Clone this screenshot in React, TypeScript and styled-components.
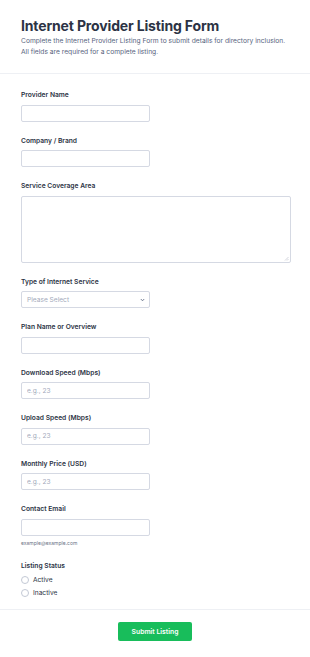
import React from 'react';
import styled, {createGlobalStyle} from 'styled-components';

const GlobalStyle = createGlobalStyle`
  html, body {
    margin: 0;
    padding: 0;
    background: #ffffff;
  }
  body {
    font-family: Inter, "Noto Sans", "Liberation Sans", sans-serif;
    color: #2c3345;
  }
  * {
    box-sizing: border-box;
  }
`;

const Page = styled.div`
  width: 310px;
  background: #ffffff;
`;

const Header = styled.header`
  padding: 17px 19px 15.5px 21px;
  border-bottom: 1px solid #eef0f4;
`;

const Title = styled.h1`
  margin: 0;
  font-size: 14px;
  line-height: 17px;
  font-weight: 700;
  color: #2c3345;
  letter-spacing: -0.15px;
`;

const Subtitle = styled.p`
  margin: 1.5px 0 0;
  font-size: 6.7px;
  line-height: 11px;
  color: #57647e;
`;

const Body = styled.div`
  padding: 16px 19px 9px 21px;
  border-bottom: 1px solid #eef0f4;
`;

const Field = styled.div<{$last?: boolean}>`
  margin-bottom: ${(p) => (p.$last ? '0' : '14px')};
`;

const Label = styled.label<{$tight?: boolean}>`
  display: block;
  font-size: 6.7px;
  line-height: 10px;
  font-weight: 600;
  color: #2c3345;
  margin-bottom: ${(p) => (p.$tight ? '3px' : '4.5px')};
`;

const Input = styled.input<{$wide?: boolean}>`
  display: block;
  width: ${(p) => (p.$wide ? '270px' : '129px')};
  height: 17px;
  margin: 0;
  padding: 0 5px;
  border: 1px solid #d5d9e3;
  border-radius: 2px;
  background: #ffffff;
  font-family: inherit;
  font-size: 6.6px;
  color: #2c3345;
  outline: none;
  &::placeholder {
    color: #a3aabb;
  }
`;

const TextAreaBox = styled.div`
  position: relative;
  width: 270px;
  height: 67px;
`;

const TextArea = styled.textarea`
  display: block;
  width: 100%;
  height: 100%;
  margin: 0;
  padding: 4px 5px;
  border: 1px solid #d5d9e3;
  border-radius: 2px;
  resize: none;
  font-family: inherit;
  font-size: 6.6px;
  outline: none;
`;

const Grip = styled.svg`
  position: absolute;
  right: 2px;
  bottom: 2px;
  width: 5px;
  height: 5px;
`;

const SelectBox = styled.div`
  display: flex;
  align-items: center;
  justify-content: space-between;
  width: 129px;
  height: 17px;
  padding: 0 4px 0 5px;
  border: 1px solid #d5d9e3;
  border-radius: 2px;
  background: #ffffff;
  font-size: 6.6px;
  color: #a3aabb;
`;

const Chevron = styled.svg`
  width: 5px;
  height: 4px;
`;

const SubLabel = styled.div`
  margin-top: 3px;
  font-size: 5px;
  line-height: 8px;
  color: #6b7486;
`;

const RadioRow = styled.div`
  display: flex;
  align-items: center;
  gap: 4px;
  height: 13px;
  font-size: 6.6px;
  color: #2c3345;
`;

const RadioCircle = styled.span`
  display: inline-block;
  width: 8px;
  height: 8px;
  border: 1px solid #c3c9d5;
  border-radius: 50%;
  background: #ffffff;
`;

const Footer = styled.div`
  display: flex;
  justify-content: center;
  padding: 12.5px 0 17px;
`;

const SubmitButton = styled.button`
  width: 74px;
  height: 19px;
  border: none;
  border-radius: 2px;
  background: #18bd5b;
  color: #ffffff;
  font-family: inherit;
  font-size: 6.8px;
  font-weight: 600;
  cursor: pointer;
`;

const textFields = [
  {label: 'Plan Name or Overview', placeholder: ''},
  {label: 'Download Speed (Mbps)', placeholder: 'e.g., 23'},
  {label: 'Upload Speed (Mbps)', placeholder: 'e.g., 23'},
  {label: 'Monthly Price (USD)', placeholder: 'e.g., 23'},
];

const App: React.FC = () => {
  return (
    <Page>
      <GlobalStyle />
      <Header>
        <Title>Internet Provider Listing Form</Title>
        <Subtitle>
          Complete the Internet Provider Listing Form to submit details for directory inclusion.
          <br />
          All fields are required for a complete listing.
        </Subtitle>
      </Header>

      <Body>
        <Field>
          <Label>Provider Name</Label>
          <Input type="text" />
        </Field>
        <Field>
          <Label>Company / Brand</Label>
          <Input type="text" />
        </Field>
        <Field>
          <Label>Service Coverage Area</Label>
          <TextAreaBox>
            <TextArea />
            <Grip viewBox="0 0 5 5">
              <path d="M4.5 1 L1 4.5 M4.5 3 L3 4.5" stroke="#b5bac6" strokeWidth="0.6" />
            </Grip>
          </TextAreaBox>
        </Field>
        <Field>
          <Label>Type of Internet Service</Label>
          <SelectBox>
            <span>Please Select</span>
            <Chevron viewBox="0 0 5 4">
              <path d="M0.8 1 L2.5 2.8 L4.2 1" fill="none" stroke="#57647e" strokeWidth="0.8" />
            </Chevron>
          </SelectBox>
        </Field>
        {textFields.map((f) => (
          <Field key={f.label}>
            <Label>{f.label}</Label>
            <Input type="text" placeholder={f.placeholder} />
          </Field>
        ))}
        <Field>
          <Label>Contact Email</Label>
          <Input type="email" />
          <SubLabel>example@example.com</SubLabel>
        </Field>
        <Field $last>
          <Label $tight>Listing Status</Label>
          <RadioRow>
            <RadioCircle />
            <span>Active</span>
          </RadioRow>
          <RadioRow>
            <RadioCircle />
            <span>Inactive</span>
          </RadioRow>
        </Field>
      </Body>

      <Footer>
        <SubmitButton type="button">Submit Listing</SubmitButton>
      </Footer>
    </Page>
  );
};

export default App;
